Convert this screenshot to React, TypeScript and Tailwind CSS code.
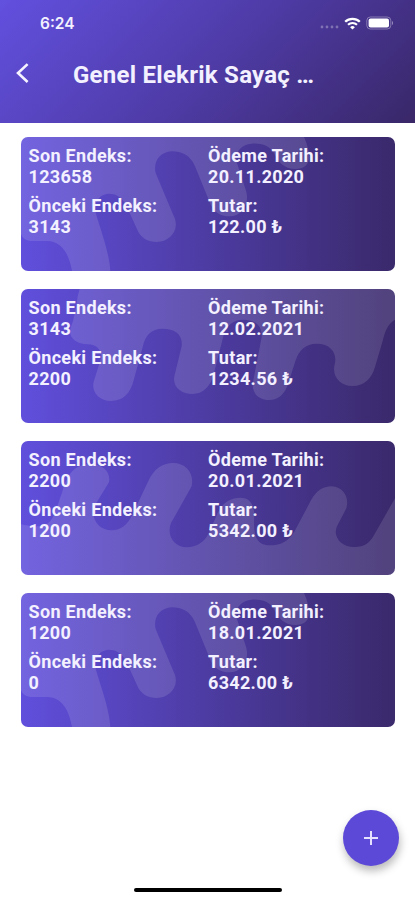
// Wave overlays share the card's aspect ratio (1122 x 402)
const WAVES = {
  rise:
    "M0 0H849Q858 18 862 40C872 75 854 96 824 96C792 96 772 76 760 50C748 26 720 18 692 20C658 23 640 48 648 78L676 164C686 204 660 238 626 238C596 238 578 224 568 200L522 88C508 54 482 43 452 43C415 45 396 76 404 108L462 246C474 286 442 315 408 315C376 315 357 298 349 278L315 204C300 178 284 170 262 170C232 172 215 202 226 234C238 276 266 350 268 402H153C146 364 130 313 78 312L28 312C14 311 5 304 0 292Z",
  drip:
    "M176 0H1122V92C1100 104 1092 128 1086 152L1062 234C1052 270 1028 291 994 291C960 291 934 266 940 230C950 200 936 164 886 164C854 164 834 184 824 214L802 282C792 316 772 333 744 333C714 333 690 312 696 278L722 144C724 110 702 92 666 92C636 92 616 110 608 138L578 256C568 294 546 315 514 315C482 315 454 294 460 262L482 172C486 136 462 119 424 119C392 119 372 140 366 170L338 274C328 314 306 336 270 336C234 336 210 308 218 278L240 208C242 184 228 166 200 166C164 166 142 144 148 120C160 90 166 54 170 22Z",
  roll:
    "M0 402V250C22 254 54 264 82 246C100 232 108 196 124 152C138 106 154 74 200 70C244 68 270 90 264 124L220 196C208 232 232 268 272 268C300 268 318 252 332 226L382 120C398 84 424 66 456 66C496 66 520 98 512 136L450 246C436 282 458 319 498 319C526 319 548 304 562 280L590 216C606 184 628 170 658 170C686 170 698 188 700 220C698 264 696 313 746 313C782 313 804 298 820 272L870 178C886 150 904 136 932 136C966 138 986 168 976 202L948 256C934 288 962 318 1000 318C1032 318 1046 304 1058 284L1122 172V402Z",
};

type Reading = {
  last: string;
  previous: string;
  date: string;
  amount: string;
  wave: keyof typeof WAVES;
};

const READINGS: Reading[] = [
  { last: "123658", previous: "3143", date: "20.11.2020", amount: "122.00 ₺", wave: "rise" },
  { last: "3143", previous: "2200", date: "12.02.2021", amount: "1234.56 ₺", wave: "drip" },
  { last: "2200", previous: "1200", date: "20.01.2021", amount: "5342.00 ₺", wave: "roll" },
  { last: "1200", previous: "0", date: "18.01.2021", amount: "6342.00 ₺", wave: "rise" },
];

function Field({ label, value }: { label: string; value: string }) {
  return (
    <div>
      <dt>{label}</dt>
      <dd>{value}</dd>
    </div>
  );
}

function ReadingCard({ last, previous, date, amount, wave }: Reading) {
  return (
    <li className="relative h-[134px] overflow-hidden rounded-[7px] bg-linear-to-r from-[#604fdc] to-[#3a296b]">
      <svg
        viewBox="0 0 1122 402"
        preserveAspectRatio="none"
        className="absolute inset-0 h-full w-full fill-white/12"
        aria-hidden
      >
        <path d={WAVES[wave]} />
      </svg>
      <dl className="relative grid grid-cols-[179.5px_1fr] gap-y-2 pt-2 pl-[7.5px] text-[18px] leading-[21px] font-bold tracking-[0.32px] text-[#f3f0ff]">
        <Field label="Son Endeks:" value={last} />
        <Field label="Ödeme Tarihi:" value={date} />
        <Field label="Önceki Endeks:" value={previous} />
        <Field label="Tutar:" value={amount} />
      </dl>
    </li>
  );
}

function StatusBar() {
  return (
    <div className="flex h-[46px] items-center justify-between pr-[21px] pl-10">
      <span className="pt-px font-[Inter] text-[15.5px] font-semibold text-[#f3f0ff]">6:24</span>
      <div className="flex items-center text-white">
        <svg width="20" height="14" viewBox="0 0 20 14" className="fill-white/30">
          <circle cx="2" cy="11" r="1.4" />
          <circle cx="7" cy="11" r="1.4" />
          <circle cx="12" cy="11" r="1.4" />
          <circle cx="17" cy="11" r="1.4" />
        </svg>
        <svg width="17" height="13" viewBox="0 0 17 13" className="ml-1" fill="none" stroke="currentColor">
          <path d="M1.2 4.8a10.4 10.4 0 0 1 14.6 0" strokeWidth="2.3" />
          <path d="M4 7.8a6.4 6.4 0 0 1 9 0" strokeWidth="2.1" />
          <path d="M8.5 12.6 6.1 10.2a3.4 3.4 0 0 1 4.8 0z" fill="currentColor" stroke="none" />
        </svg>
        <svg width="28" height="14" viewBox="0 0 28 14" className="ml-[5px]">
          <rect x="0.8" y="1" width="24" height="12" rx="3.6" fill="none" stroke="white" strokeOpacity="0.35" />
          <rect x="2.6" y="2.6" width="20.4" height="8.8" rx="2" fill="white" />
          <path d="M26 5v4c1.4-.5 1.4-3.5 0-4z" fill="white" fillOpacity="0.45" />
        </svg>
      </div>
    </div>
  );
}

export default function App() {
  return (
    <div className="relative flex h-[900px] w-[415px] flex-col overflow-hidden bg-white font-[Roboto,sans-serif]">
      <header className="h-[123px] shrink-0 bg-linear-[135deg] from-[#6250df] via-[#4f3ca8] to-[#392768]">
        <StatusBar />
        <div className="flex h-[56px] items-center">
          <button aria-label="Geri" className="ml-[15px] flex h-6 w-[58px] items-center">
            <svg width="14" height="22" viewBox="0 0 14 22" fill="none" stroke="#f5f3ff" strokeWidth="2.6">
              <path d="M12.6 1.1 3 10l9.6 9" />
            </svg>
          </button>
          <h1 className="pt-0.5 text-[24px] font-bold tracking-[0.25px] text-[#f3f0ff]">Genel Elekrik Sayaç …</h1>
        </div>
      </header>

      <ul className="flex flex-col gap-[18px] pt-[14px] pr-5 pl-[21px]">
        {READINGS.map((reading) => (
          <ReadingCard key={reading.date} {...reading} />
        ))}
      </ul>

      <button
        aria-label="Ekle"
        className="absolute top-[810px] left-[343px] flex size-14 items-center justify-center rounded-full bg-[#5c49d8] shadow-[1px_5px_8px_rgba(0,0,0,0.28)]"
      >
        <svg width="14" height="14" viewBox="0 0 14 14" stroke="#e6e1ff" strokeWidth="2">
          <path d="M7 0v14M0 7h14" />
        </svg>
      </button>

      <div className="absolute bottom-2 left-[134px] h-1 w-[148px] rounded-full bg-black" />
    </div>
  );
}
